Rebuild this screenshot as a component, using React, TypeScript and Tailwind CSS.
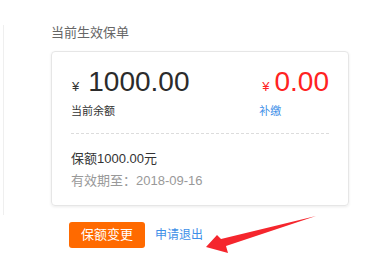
import React from 'react';

export default function App() {
  return (
    <div className="relative flex h-[256px] w-[379px] overflow-hidden bg-white font-['Liberation_Sans','Noto_Sans_CJK_SC',sans-serif]">
      <div className="ml-[3px] mt-[25px] h-[190px] w-px bg-[#efefef]" />

      <div className="ml-[47px] w-[298px] pt-[25px]">
        <p className="text-[13px] leading-[16px] text-[#666]">当前生效保单</p>

        <div className="mt-[10px] h-[155px] rounded-[4px] border border-[#e6e6e6] px-[19px] pt-[16px] shadow-[0_1px_3px_rgba(0,0,0,0.08)]">
          <div className="flex justify-between">
            <div>
              <div className="flex items-baseline pl-[1px] leading-[28px]">
                <span className="text-[13px] text-[#333]">¥</span>
                <span className="ml-[9px] text-[28px] text-[#2b2b2b]">1000.00</span>
              </div>
              <p className="mt-[3px] text-[11px] leading-[14px] text-[#333]">当前余额</p>
            </div>
            <div>
              <div className="flex items-baseline pl-[3px] leading-[28px]">
                <span className="text-[13px] text-[#ff2222]">¥</span>
                <span className="ml-[5px] text-[28px] text-[#ff2222]">0.00</span>
              </div>
              <p className="mt-[3px] text-[11px] leading-[14px] text-[#3d8fe8]">补缴</p>
            </div>
          </div>

          <div className="mt-[15px] border-t border-dashed border-[#dcdcdc]" />

          <p className="mt-[16px] text-[13px] leading-[18px] text-[#333]">保额1000.00元</p>
          <p className="mt-[4px] text-[13px] leading-[18px] text-[#999]">有效期至：2018-09-16</p>
        </div>

        <div className="ml-[18px] mt-[16px] flex items-center gap-[10px]">
          <button className="h-[26px] w-[76px] rounded-[3px] bg-[#ff6a00] text-[13px] text-white">保额变更</button>
          <span className="text-[12px] text-[#3d8fe8]">申请退出</span>
        </div>
      </div>

      <svg className="absolute inset-0" width="379" height="256" viewBox="0 0 379 256">
        <polygon points="206,247 217,235 221,239 316,216 226,246 228,253" fill="#f5262d" />
      </svg>
    </div>
  );
}
